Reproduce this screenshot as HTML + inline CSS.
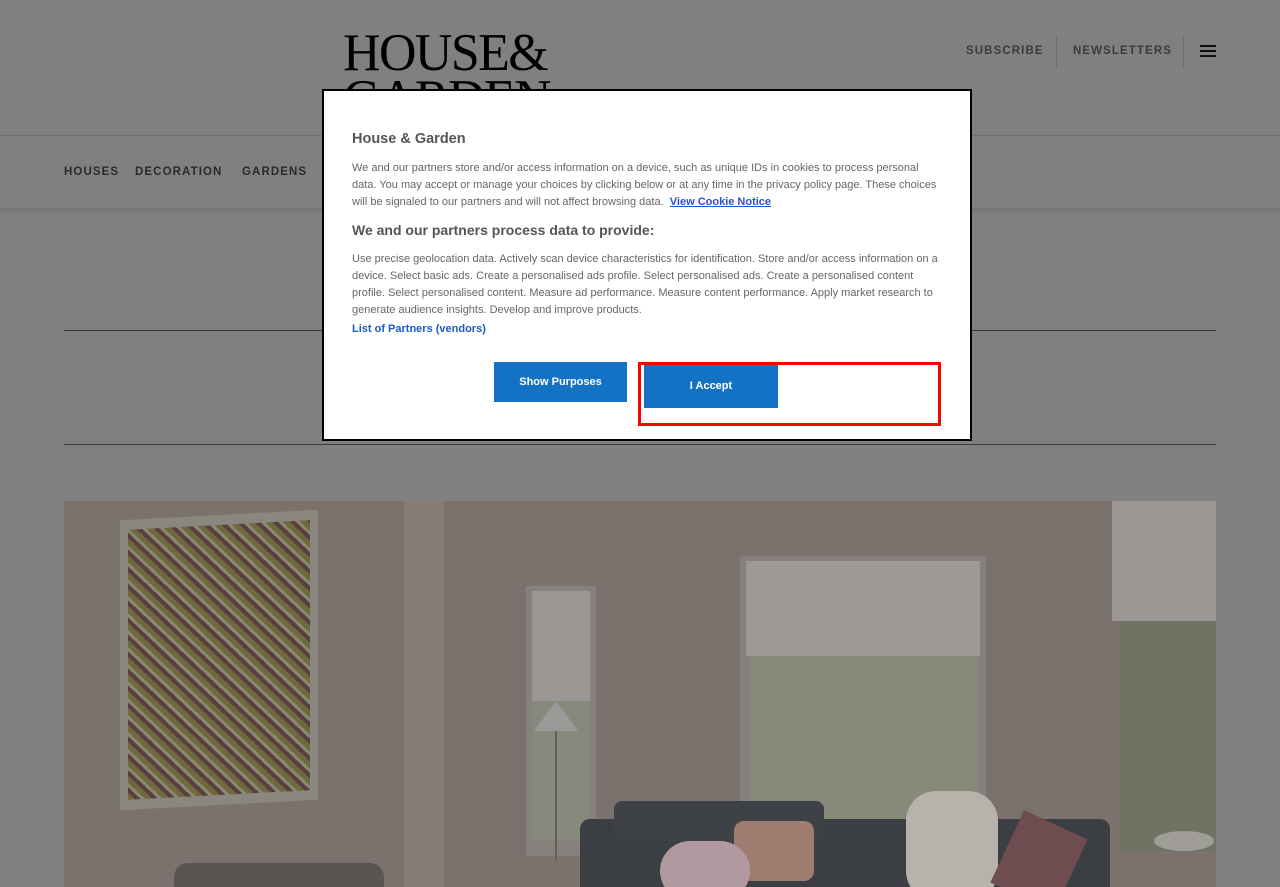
<!DOCTYPE html>
<html><head><meta charset="utf-8"><style>
*{margin:0;padding:0;box-sizing:border-box}
body{width:1280px;height:887px;overflow:hidden;background:#808080;font-family:"Liberation Sans",sans-serif;position:relative}
.abs{position:absolute}
.nav{font-weight:bold;font-size:11.5px;letter-spacing:1.1px;color:#333}
.logo{font-family:"Liberation Serif",serif;color:#000;font-size:53px;line-height:46px;letter-spacing:-1.6px;transform:scaleX(0.98);transform-origin:left}
</style></head><body>
<div class="abs" style="left:0;top:0;width:1280px;height:89px;overflow:hidden">
<div class="abs logo" style="left:343px;top:30px">HOUSE&amp;<br>GARDEN</div>
</div>
<div class="abs nav" style="left:966px;top:45px;color:#3a3a3a">SUBSCRIBE</div>
<div class="abs" style="left:1056px;top:36px;width:1px;height:32px;background:#6e6e6e"></div>
<div class="abs nav" style="left:1073px;top:45px;color:#3a3a3a">NEWSLETTERS</div>
<div class="abs" style="left:1183px;top:36px;width:1px;height:32px;background:#6e6e6e"></div>
<div class="abs" style="left:1200px;top:45px;width:16px;height:2px;background:#111;box-shadow:0 5px 0 #111,0 10px 0 #111"></div>
<div class="abs" style="left:0;top:135px;width:1280px;height:1px;background:#6e6e6e"></div>
<div class="abs nav" style="left:64px;top:166px;color:#2a2a2a">HOUSES</div>
<div class="abs nav" style="left:135px;top:166px;color:#2a2a2a">DECORATION</div>
<div class="abs nav" style="left:242px;top:166px;color:#2a2a2a">GARDENS</div>
<div class="abs" style="left:0;top:208px;width:1280px;height:6px;background:linear-gradient(#747474,#808080)"></div>
<div class="abs" style="left:64px;top:330px;width:1152px;height:1px;background:#3a3a3a"></div>
<div class="abs" style="left:64px;top:444px;width:1152px;height:1px;background:#3a3a3a"></div>

<!-- image -->
<div class="abs" style="left:64px;top:501px;width:1152px;height:386px;background:#7b716d;overflow:hidden">
  <div class="abs" style="left:56px;top:14px;width:198px;height:290px;background:#8a8780;transform:skewY(-3deg)"></div>
  <div class="abs" style="left:64px;top:24px;width:182px;height:270px;background:repeating-linear-gradient(45deg,#6e6a3e 0 5px,#5a3f40 5px 9px,#8a8870 9px 12px);transform:skewY(-3deg)"></div>
  <div class="abs" style="left:340px;top:0;width:40px;height:386px;background:#857b77"></div>
  <div class="abs" style="left:462px;top:85px;width:70px;height:270px;background:#87817d"></div>
  <div class="abs" style="left:468px;top:90px;width:58px;height:110px;background:#9a9794"></div>
  <div class="abs" style="left:468px;top:200px;width:58px;height:140px;background:#858a7c"></div>
  <div class="abs" style="left:676px;top:55px;width:246px;height:290px;background:#86807c"></div>
  <div class="abs" style="left:682px;top:60px;width:234px;height:95px;background:#9c9996"></div>
  <div class="abs" style="left:686px;top:155px;width:228px;height:180px;background:#878a7a"></div>
  <div class="abs" style="left:1048px;top:0;width:104px;height:120px;background:#9a9794"></div>
  <div class="abs" style="left:1056px;top:120px;width:96px;height:230px;background:#6e7364"></div>
  <div class="abs" style="left:470px;top:200px;width:44px;height:30px;background:#9c9a98;clip-path:polygon(50% 0,100% 100%,0 100%)"></div>
  <div class="abs" style="left:491px;top:230px;width:2px;height:130px;background:#6a5e4e"></div>
  <div class="abs" style="left:516px;top:318px;width:530px;height:80px;background:#3b3e42;border-radius:10px"></div>
  <div class="abs" style="left:550px;top:300px;width:210px;height:40px;background:#3e4145;border-radius:8px"></div>
  <div class="abs" style="left:842px;top:290px;width:92px;height:110px;background:#b7b2ac;border-radius:30px"></div>
  <div class="abs" style="left:940px;top:320px;width:70px;height:80px;background:#6e4c50;transform:rotate(25deg)"></div>
  <div class="abs" style="left:670px;top:320px;width:80px;height:60px;background:#9e7c70;border-radius:10px"></div>
  <div class="abs" style="left:596px;top:340px;width:90px;height:60px;background:#b09aa0;border-radius:30px"></div>
  <div class="abs" style="left:110px;top:362px;width:210px;height:40px;background:#5a5553;border-radius:14px"></div>
  <div class="abs" style="left:1090px;top:330px;width:60px;height:20px;background:#a09c98;border-radius:50%"></div>
</div>

<!-- dialog -->
<div class="abs" style="left:322px;top:89px;width:650px;height:352px;background:#fff;border:2px solid #000;box-shadow:0 0 0 1px #fff inset">
  <div class="abs" style="left:28px;top:40px;font-size:14.5px;font-weight:bold;color:#555">House &amp; Garden</div>
  <div class="abs" style="left:28px;top:69px;width:592px;font-size:11px;line-height:17px;color:#666">We and our partners store and/or access information on a device, such as unique IDs in cookies to process personal data. You may accept or manage your choices by clicking below or at any time in the privacy policy page. These choices will be signaled to our partners and will not affect browsing data. &nbsp;<b style="color:#1a5bc4;text-decoration:underline">View Cookie Notice</b></div>
  <div class="abs" style="left:28px;top:131px;font-size:14px;font-weight:bold;color:#555">We and our partners process data to provide:</div>
  <div class="abs" style="left:28px;top:160px;width:588px;font-size:11px;line-height:17px;color:#666">Use precise geolocation data. Actively scan device characteristics for identification. Store and/or access information on a device. Select basic ads. Create a personalised ads profile. Select personalised ads. Create a personalised content profile. Select personalised content. Measure ad performance. Measure content performance. Apply market research to generate audience insights. Develop and improve products.</div>
  <div class="abs" style="left:28px;top:232px;font-size:11px;font-weight:bold;color:#1a5bc4">List of Partners (vendors)</div>
  <div class="abs" style="left:170px;top:271px;width:133px;height:40px;background:#1472c4;color:#fff;font-size:11px;font-weight:bold;text-align:center;line-height:40px">Show Purposes</div>
  <div class="abs" style="left:314px;top:271px;width:303px;height:64px;border:3px solid #f00"></div>
  <div class="abs" style="left:320px;top:274px;width:134px;height:43px;background:#1472c4;color:#fff;font-size:11px;font-weight:bold;text-align:center;line-height:43px">I Accept</div>
</div>
</body></html>
